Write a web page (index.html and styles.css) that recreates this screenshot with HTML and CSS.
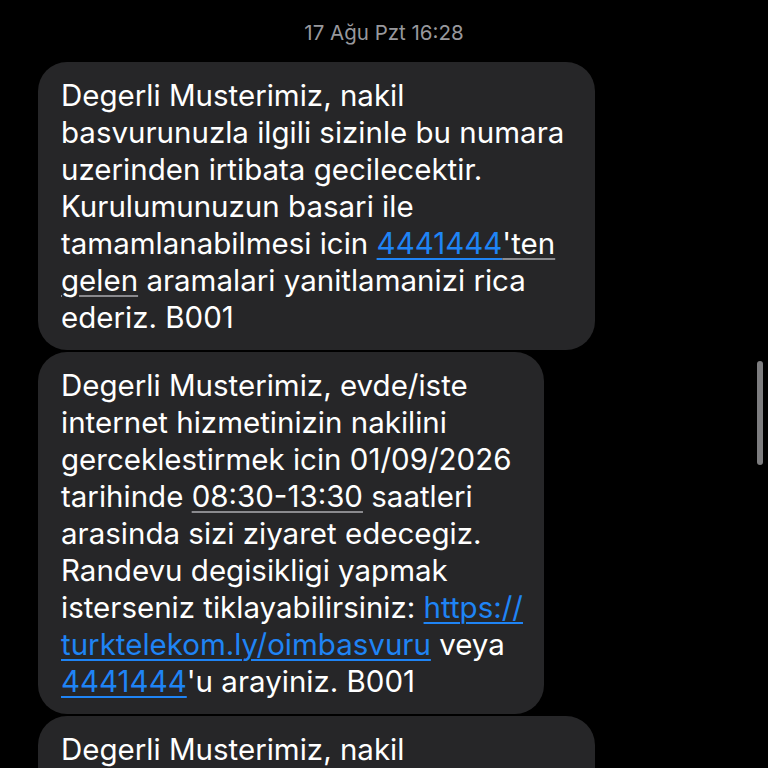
FILE: index.html
```html
<!DOCTYPE html>
<html lang="tr">
<head>
<meta charset="utf-8">
<link rel="stylesheet" href="styles.css">
</head>
<body>
<div class="screen">
  <div class="stamp">17 Ağu Pzt 16:28</div>
  <div class="thread">
    <div class="bubble wide">Degerli Musterimiz, nakil<br>basvurunuzla ilgili sizinle bu numara<br>uzerinden irtibata gecilecektir.<br>Kurulumunuzun basari ile<br>tamamlanabilmesi icin <span class="link">4441444</span><span class="soft">'ten</span><br><span class="soft">gelen</span> aramalari yanitlamanizi rica<br>ederiz. B001</div>
    <div class="bubble narrow">Degerli Musterimiz, evde/iste<br>internet hizmetinizin nakilini<br>gerceklestirmek icin 01/09/2026<br>tarihinde <span class="soft">08:30-13:30</span> saatleri<br>arasinda sizi ziyaret edecegiz.<br>Randevu degisikligi yapmak<br>isterseniz tiklayabilirsiniz: <span class="link">https://</span><br><span class="link">turktelekom.ly/oimbasvuru</span> veya<br><span class="link">4441444</span>'u arayiniz. B001</div>
    <div class="bubble wide tail">Degerli Musterimiz, nakil</div>
  </div>
  <div class="scrollbar"></div>
</div>
</body>
</html>
```
FILE: styles.css
```css
html, body {
  margin: 0;
  padding: 0;
  background: #000;
}
.screen {
  position: relative;
  width: 768px;
  height: 768px;
  overflow: hidden;
  background: #000;
  font-family: "Inter", "Liberation Sans", sans-serif;
  color: #fff;
}
.stamp {
  text-align: center;
  color: #98989d;
  font-size: 20.5px;
  line-height: 24px;
  padding-top: 21px;
  height: 40px;
  box-sizing: border-box;
}
.thread {
  display: flex;
  flex-direction: column;
  align-items: flex-start;
  gap: 2px;
  padding-left: 38px;
  padding-top: 22px;
}
.bubble {
  box-sizing: border-box;
  background: #262628;
  border-radius: 29px;
  padding: 15px 20px 14px 23px;
  font-size: 29.5px;
  line-height: 37px;
  white-space: nowrap;
}
.wide { width: 557px; }
.narrow { width: 506px; }
.tail { padding-bottom: 60px; }
.link {
  color: #1f84f5;
  text-decoration: underline;
  text-decoration-thickness: 2px;
  text-underline-offset: 4px;
}
.soft {
  text-decoration: underline;
  text-decoration-color: #8a8a8e;
  text-decoration-thickness: 2px;
  text-underline-offset: 4px;
}
.scrollbar {
  position: absolute;
  left: 757px;
  top: 361px;
  width: 6px;
  height: 104px;
  border-radius: 3px;
  background: #7d7d7f;
}
```
